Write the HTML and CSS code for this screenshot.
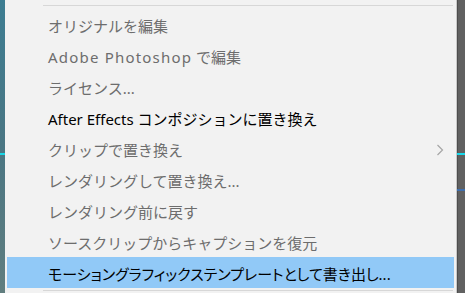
FILE: index.html
```html
<!DOCTYPE html>
<html lang="ja">
<head>
<meta charset="utf-8">
<link rel="stylesheet" href="styles.css">
</head>
<body>
<div class="screen">
  <div class="strip-left"></div>
  <div class="menu">
    <div class="sep"></div>
    <ul class="items">
      <li class="item disabled">オリジナルを編集</li>
      <li class="item disabled"><span class="app-name">Adobe Photoshop</span>&nbsp;で編集</li>
      <li class="item disabled">ライセンス...</li>
      <li class="item">After Effects コンポジションに置き換え</li>
      <li class="item disabled has-sub">クリップで置き換え
        <svg class="chev" width="8" height="12" viewBox="0 0 8 12"><polyline points="1.5,1 6.5,6 1.5,11" fill="none" stroke="#a6a6a6" stroke-width="1.2"/></svg>
      </li>
      <li class="item disabled">レンダリングして置き換え...</li>
      <li class="item disabled">レンダリング前に戻す</li>
      <li class="item disabled">ソースクリップからキャプションを復元</li>
      <li class="item active proportional">モーショングラフィックステンプレートとして書き出し...</li>
    </ul>
    <div class="sep bottom"></div>
  </div>
  <div class="strip-right"></div>
</div>
</body>
</html>
```
FILE: styles.css
```css
html, body {
  margin: 0;
  padding: 0;
}
body {
  width: 465px;
  height: 293px;
  overflow: hidden;
  font-family: "Noto Sans", "Noto Sans CJK JP", sans-serif;
}
.screen {
  display: flex;
  height: 293px;
}
.strip-left {
  width: 5px;
  flex: none;
  background:
    linear-gradient(to bottom, transparent 153px, #19d6e6 153px, #19d6e6 155px, transparent 155px),
    linear-gradient(to bottom, #3d7d92 0%, #4a7683 50%, #617e7f 100%);
}
.menu {
  width: 452px;
  flex: none;
  background: #f2f2f2;
  border-right: 1px solid #c9c9c9;
  padding: 5px 2px 0 2px;
  box-sizing: border-box;
  display: flex;
  flex-direction: column;
}
.sep {
  height: 1px;
  background: #d7d7d7;
  margin-left: 36px;
  margin-right: 1px;
}
.sep.bottom {
  margin-top: 2px;
}
.items {
  list-style: none;
  margin: 3px 0 0 0;
  padding: 0;
}
.item {
  height: 31px;
  box-sizing: border-box;
  padding-top: 2px;
  padding-left: 41px;
  font-size: 15px;
  color: #000;
  display: flex;
  align-items: center;
  white-space: nowrap;
}
.app-name {
  letter-spacing: 1.2px;
}
.item.proportional {
  font-feature-settings: "palt";
}
.item.disabled {
  color: #6d6d6d;
}
.item.has-sub {
  justify-content: space-between;
  padding-right: 10px;
}
.chev {
  display: block;
}
.item.active {
  background: #91c9f7;
  color: #000;
}
.strip-right {
  flex: 1;
  background:
    linear-gradient(to bottom, transparent 153px, #17d9ec 153px, #17d9ec 155px, transparent 155px),
    linear-gradient(to bottom, transparent 189px, #3f6fae 189px, #3f6fae 191px, transparent 191px),
    linear-gradient(to right, #4e4e4e 0, #4e4e4e 1px, #616161 1px);
}
```
